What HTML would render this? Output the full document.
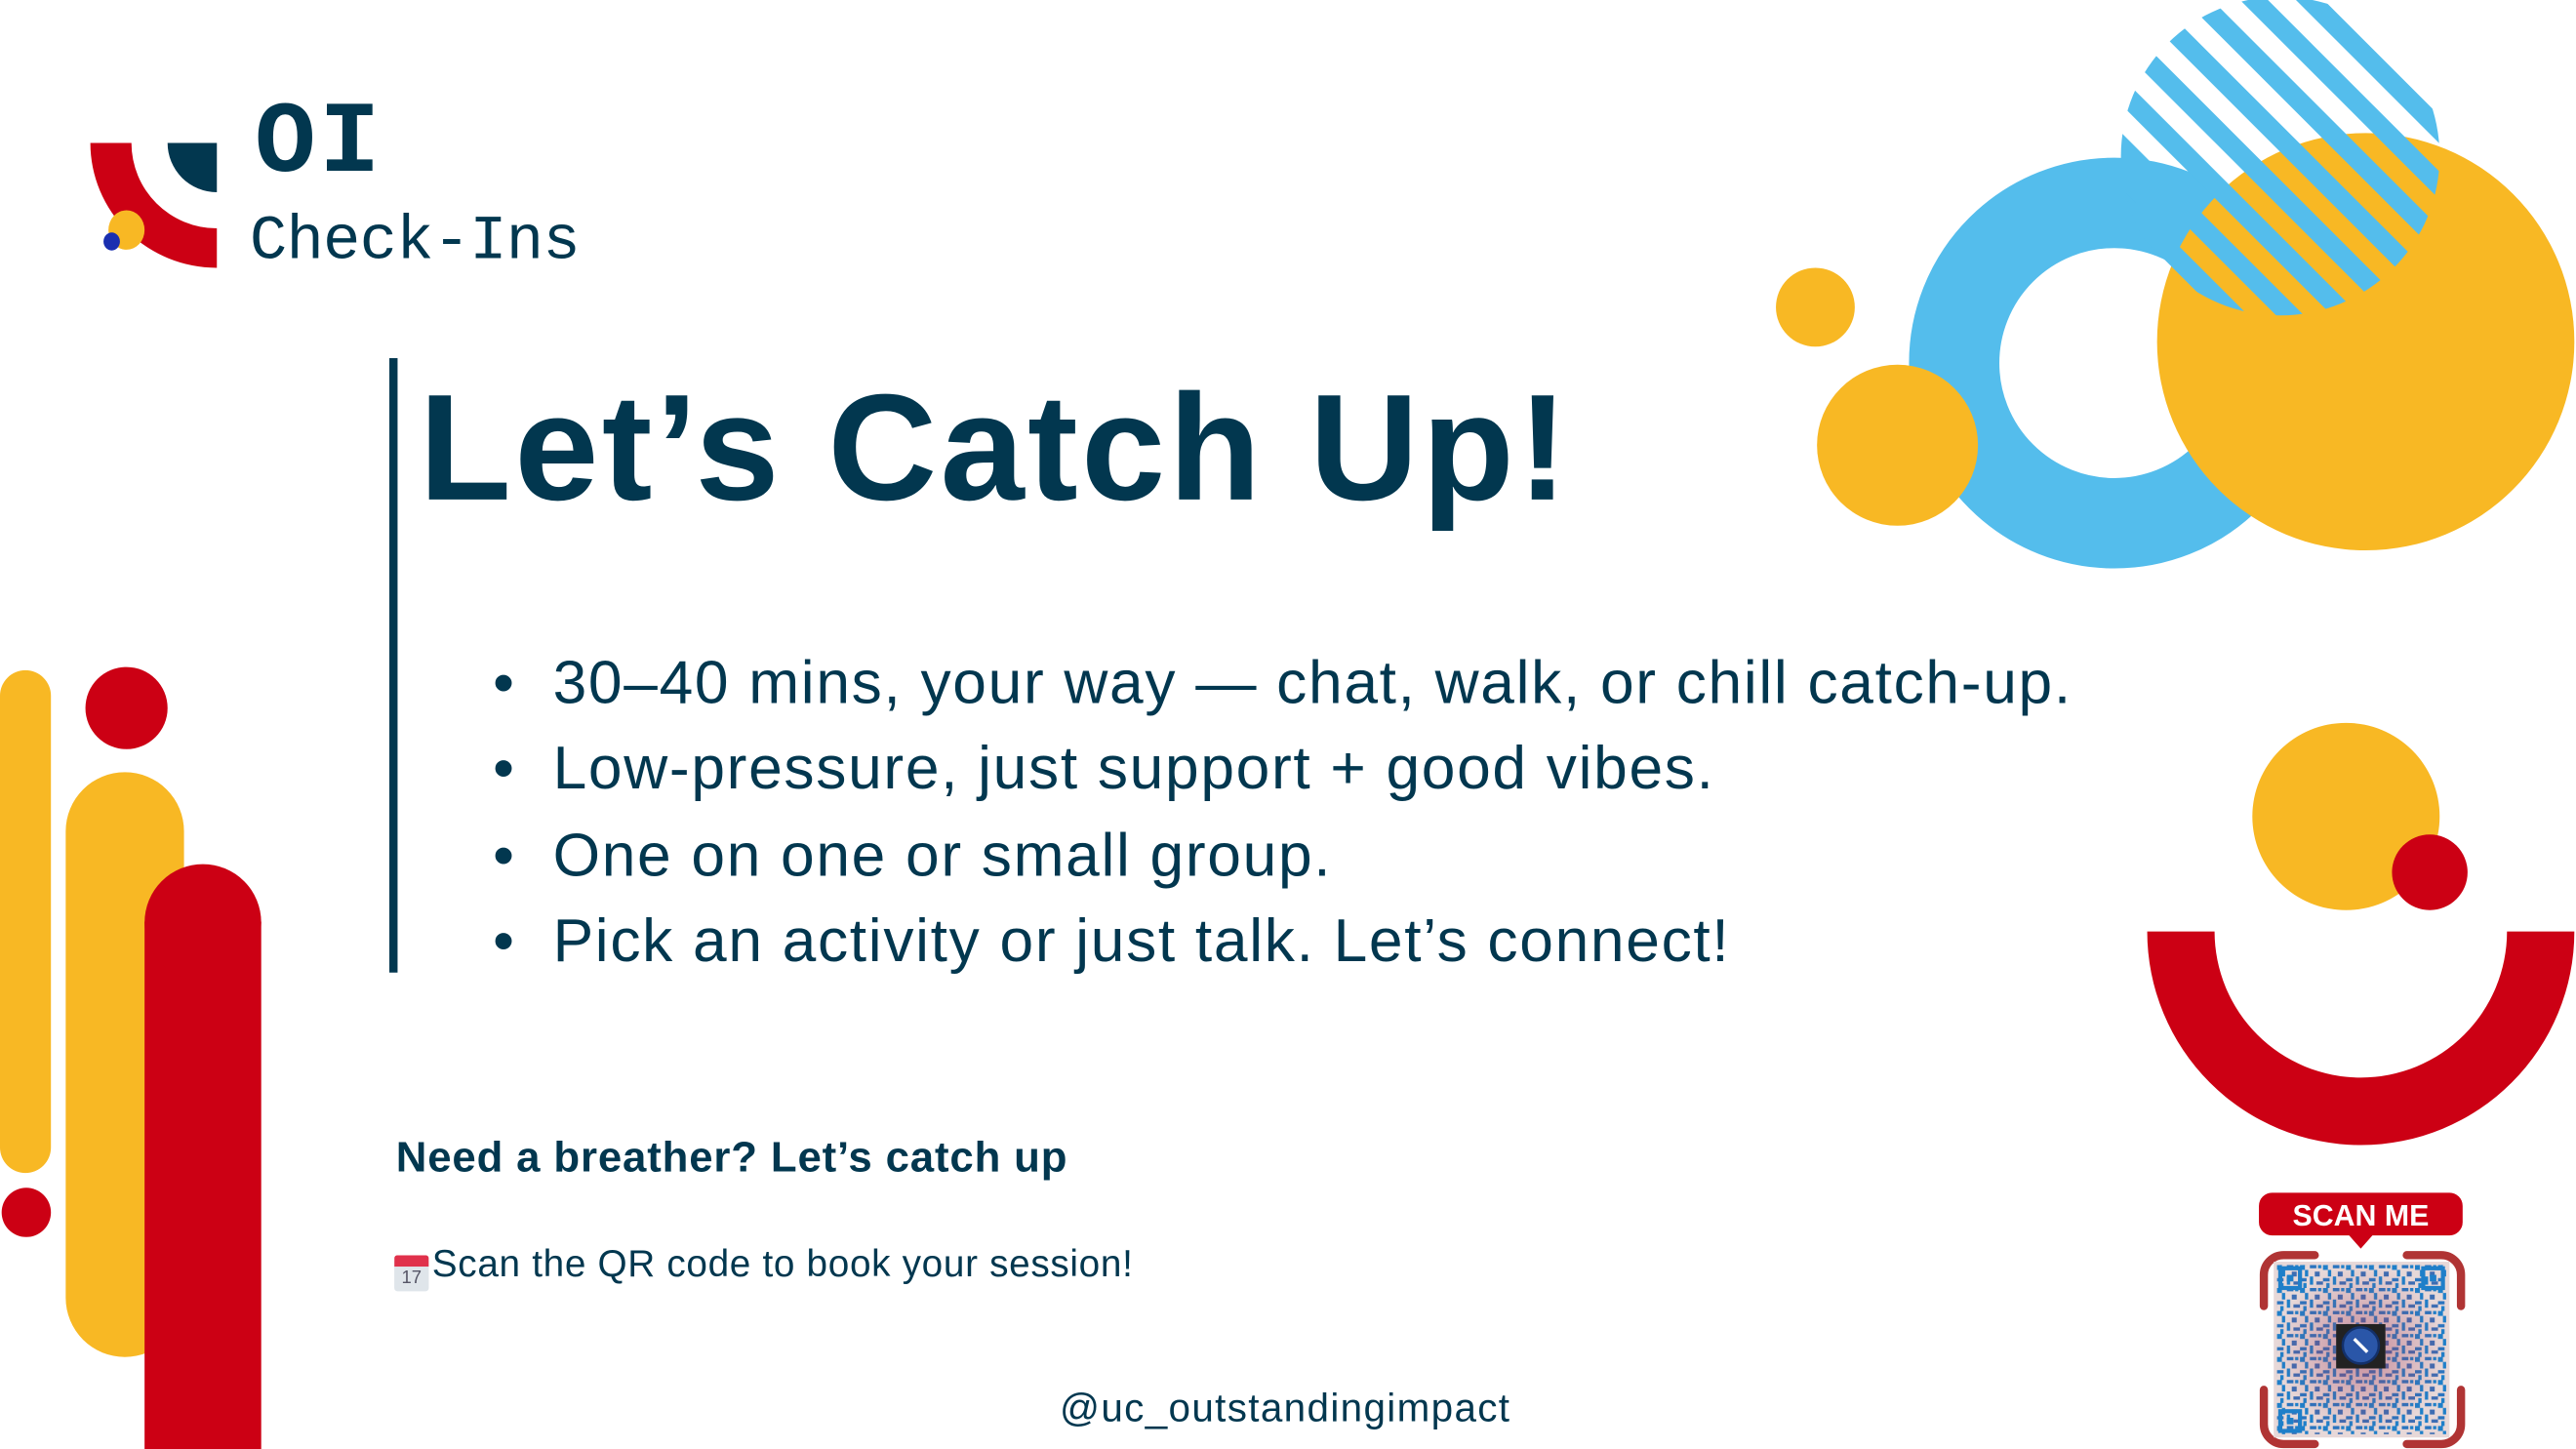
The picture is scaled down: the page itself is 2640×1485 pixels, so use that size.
<!DOCTYPE html>
<html><head><meta charset="utf-8">
<style>
html,body{margin:0;padding:0;background:#fff;overflow:hidden;width:2640px;height:1485px}
#w{position:absolute;left:0;top:0;width:1568px;height:882px;overflow:hidden;transform:scale(1.68367);transform-origin:0 0;font-family:"Liberation Sans",sans-serif;color:#02374f}
.t{position:absolute;white-space:nowrap}
</style></head><body>
<div id="w">
<svg width="1568" height="882" style="position:absolute;left:0;top:0">
  <defs>
    <clipPath id="sc"><circle cx="1388" cy="95" r="97"/></clipPath>
  </defs>
  <path d="M55 87 H80 A52 52 0 0 0 132 139 V163 A77 76 0 0 1 55 87 Z" fill="#cc0014"/>
  <path d="M102 87 H132 V117 A30 30 0 0 1 102 87 Z" fill="#02374f"/>
  <ellipse cx="77" cy="140" rx="11" ry="12" fill="#f8b824"/>
  <ellipse cx="68" cy="147" rx="5" ry="5.5" fill="#1a2fb0"/>
  <rect x="0" y="408" width="31" height="306" rx="15.5" fill="#f8b824"/>
  <circle cx="16" cy="738" r="15" fill="#cc0014"/>
  <circle cx="77" cy="431" r="25" fill="#cc0014"/>
  <rect x="40" y="470" width="72" height="356" rx="36" fill="#f8b824"/>
  <rect x="88" y="561" width="71" height="321" fill="#cc0014"/>
  <circle cx="123.5" cy="561.5" r="35.5" fill="#cc0014"/>
  <circle cx="1105" cy="187" r="24" fill="#f8b824"/>
  <circle cx="1287" cy="221" r="97.5" fill="none" stroke="#54bdec" stroke-width="55"/>
  <circle cx="1155" cy="271" r="49" fill="#f8b824"/>
  <circle cx="1440" cy="208" r="127" fill="#f8b824"/>
  <g clip-path="url(#sc)" stroke="#54bdec" stroke-width="12">
    <line x1="1000" y1="-100" x2="1300" y2="200"/>
    <line x1="1034" y1="-100" x2="1334" y2="200"/>
    <line x1="1068" y1="-100" x2="1368" y2="200"/>
    <line x1="1102" y1="-100" x2="1402" y2="200"/>
    <line x1="1136" y1="-100" x2="1436" y2="200"/>
    <line x1="1170" y1="-100" x2="1470" y2="200"/>
    <line x1="1204" y1="-100" x2="1504" y2="200"/>
    <line x1="1238" y1="-100" x2="1538" y2="200"/>
    <line x1="1272" y1="-100" x2="1572" y2="200"/>
    <line x1="1306" y1="-100" x2="1606" y2="200"/>
  </g>
  <circle cx="1428" cy="497" r="57" fill="#f8b824"/>
  <circle cx="1479" cy="531" r="23" fill="#cc0014"/>
  <path d="M1307 567 H1348 A89 89 0 0 0 1526 567 H1567 A130 130 0 0 1 1307 567 Z" fill="#cc0014"/>
  <rect x="237" y="218" width="5" height="374" fill="#02374f"/>
  <rect x="1375" y="726" width="124" height="26" rx="8" fill="#cc0014"/>
  <path d="M1429 751 L1437 760 L1445 751 Z" fill="#cc0014"/>
  <g fill="none" stroke="#b03434" stroke-width="5" stroke-linecap="round">
    <path d="M1378 795 V776 A12 12 0 0 1 1390 764 H1409"/>
    <path d="M1465 764 H1486 A12 12 0 0 1 1498 776 V795"/>
    <path d="M1378 846 V867 A12 12 0 0 0 1390 879 H1409"/>
    <path d="M1465 879 H1486 A12 12 0 0 0 1498 867 V846"/>
  </g>
  <defs>
    <pattern id="qp" width="14" height="14" patternUnits="userSpaceOnUse">
      <rect x="0" y="0" width="3" height="3" fill="#1f7fc9"/><rect x="6" y="0" width="4" height="2" fill="#2a74bf"/>
      <rect x="3" y="3" width="2" height="4" fill="#1f7fc9"/><rect x="9" y="4" width="3" height="3" fill="#3d6db3"/>
      <rect x="0" y="8" width="4" height="2" fill="#2a74bf"/><rect x="6" y="7" width="2" height="5" fill="#1f7fc9"/>
      <rect x="10" y="10" width="4" height="2" fill="#3d6db3"/><rect x="2" y="11" width="2" height="3" fill="#1f7fc9"/>
      <rect x="11" y="0" width="2" height="2" fill="#1f7fc9"/>
    </pattern>
    <radialGradient id="qg"><stop offset="0" stop-color="#a23a5a" stop-opacity=".5"/><stop offset="1" stop-color="#a23a5a" stop-opacity="0"/></radialGradient>
  </defs>
  <rect x="1384" y="768" width="107" height="107" fill="#e7d8d8"/>
  <rect x="1386" y="770" width="103" height="103" fill="url(#qp)"/>
  <rect x="1386" y="770" width="103" height="103" fill="url(#qg)"/>
  <g fill="none" stroke="#1f7fc9" stroke-width="2.5">
    <rect x="1388" y="772" width="12" height="12"/><rect x="1475" y="772" width="12" height="12"/><rect x="1388" y="859" width="12" height="12"/>
  </g>
  <g fill="#1f7fc9"><rect x="1392" y="776" width="4" height="4"/><rect x="1479" y="776" width="4" height="4"/><rect x="1392" y="863" width="4" height="4"/></g>
  <rect x="1422" y="806" width="30" height="27" fill="#222"/>
  <circle cx="1437" cy="819" r="11" fill="#2a56a8" stroke="#13306a" stroke-width="1.5"/>
  <path d="M1433 815 L1441 823" stroke="#fff" stroke-width="2"/>
</svg>
<div class="t" style="left:155px;top:52px;font-family:'Liberation Mono',monospace;font-weight:bold;font-size:62px;letter-spacing:2px">OI</div>
<div class="t" style="left:152px;top:126px;font-family:'Liberation Mono',monospace;font-size:38px;letter-spacing:-0.5px">Check-Ins</div>
<div class="t" style="left:255px;top:221px;font-weight:bold;font-size:92px;letter-spacing:2px">Let’s Catch Up!</div>
<div class="t" style="left:300px;top:390px;font-size:37px;line-height:52.3px;letter-spacing:1px">
<div>•&nbsp; 30–40 mins, your way — chat, walk, or chill catch-up.</div>
<div>•&nbsp; Low-pressure, just support + good vibes.</div>
<div>•&nbsp; One on one or small group.</div>
<div>•&nbsp; Pick an activity or just talk. Let’s connect!</div>
</div>
<div class="t" style="left:241px;top:689px;font-weight:bold;font-size:26px;letter-spacing:0.5px">Need a breather? Let’s catch up</div>
<div class="t" style="left:240px;top:756px;font-size:23px;letter-spacing:0.4px"><span style="display:inline-block;width:21px;height:22px;vertical-align:-4px;margin-right:2px;background:#dfe5ea;border-top:7px solid #e0314b;box-sizing:border-box;border-radius:2px;font-size:11px;color:#556;text-align:center;line-height:15px;letter-spacing:0">17</span>Scan the QR code to book your session!</div>
<div class="t" style="left:645px;top:844px;font-size:24px;letter-spacing:0.8px">@uc_outstandingimpact</div>
<div class="t" style="left:1375px;top:727px;width:124px;text-align:center;color:#fff;font-weight:bold;font-size:18px;line-height:26px">SCAN ME</div>
</div>
</body></html>
